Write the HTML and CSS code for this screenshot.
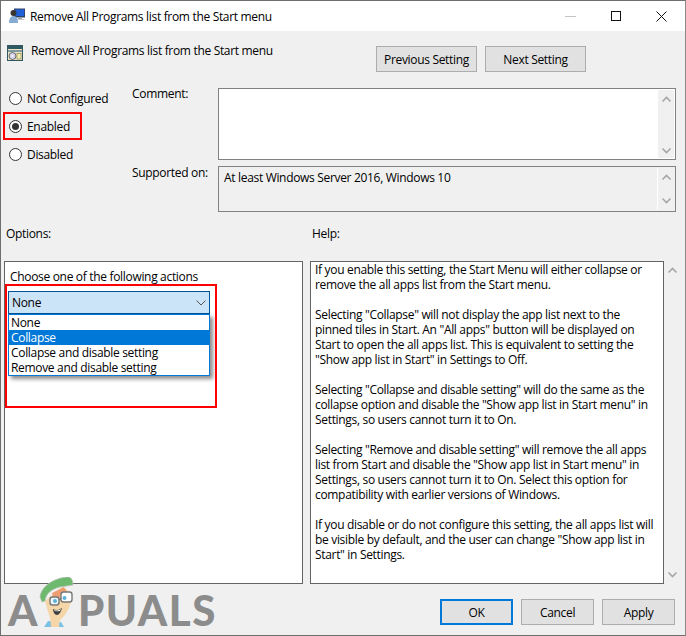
FILE: index.html
```html
<!DOCTYPE html>
<html lang="en">
<head>
<meta charset="utf-8">
<title>Remove All Programs list from the Start menu</title>
<link rel="stylesheet" href="styles.css">
</head>
<body>
<div class="window">
  <header class="titlebar">
    <svg class="title-icon" width="16" height="16" viewBox="0 0 16 16"><rect x="5" y="0.5" width="11" height="9" fill="#2d4468"/><rect x="6" y="1.5" width="9" height="6.5" fill="#1f5fd8"/><rect x="9" y="9.5" width="4" height="2" fill="#9aa0a8"/><rect x="7" y="11" width="8" height="1" fill="#c4c8cc"/><circle cx="4.5" cy="5" r="3" fill="#3a3530"/><path d="M0 15c0-5 2-7 4.5-7S9 10 9 15z" fill="#86acd4"/></svg>
    <span class="title-text">Remove All Programs list from the Start menu</span>
    <div class="win-controls">
      <span class="ctl ctl-min"></span>
      <span class="ctl ctl-max"></span>
      <svg class="ctl-close" width="11" height="11" viewBox="0 0 11 11"><path d="M.5.5l10 10M10.5.5l-10 10" stroke="#111" fill="none"/></svg>
    </div>
  </header>
  <main class="body">
    <div class="head-row">
      <svg class="policy-icon" width="16" height="16" viewBox="0 0 16 16"><rect x=".5" y=".5" width="15" height="15" fill="#ece6c4" stroke="#33575e"/><rect x="1" y="1" width="14" height="3" fill="#2f5a64"/><rect x="1" y="5" width="14" height="2" fill="#7f9aa2"/><circle cx="5.5" cy="11" r="3.5" fill="#d4d2e6" stroke="#6a6a78"/><circle cx="5.5" cy="11" r="1" fill="#fff"/><rect x="10" y="8.5" width="4" height="5.5" fill="#f4eeb0" stroke="#8a8450" stroke-width=".7"/></svg>
      <span class="policy-name">Remove All Programs list from the Start menu</span>
      <div class="nav-btns">
        <button class="btn btn-nav">Previous Setting</button>
        <button class="btn btn-nav">Next Setting</button>
      </div>
    </div>
    <div class="settings">
      <div class="radios">
        <label class="radio"><span class="dot"></span>Not Configured</label>
        <label class="radio radio-on"><span class="dot"></span>Enabled<span class="mark mark-enabled"></span></label>
        <label class="radio"><span class="dot"></span>Disabled</label>
      </div>
      <div class="fields">
        <span class="field-label">Comment:</span>
        <div class="box box-comment">
          <div class="scrollbar"><svg class="chev" viewBox="0 0 9 5"><path d="M.5 4.5l4-4 4 4" /></svg><svg class="chev" viewBox="0 0 9 5"><path d="M.5.5l4 4 4-4" /></svg></div>
        </div>
        <span class="field-label field-label-support">Supported on:</span>
        <div class="box box-support">
          <span class="support-text">At least Windows Server 2016, Windows 10</span>
          <div class="scrollbar"><svg class="chev" viewBox="0 0 9 5"><path d="M.5 4.5l4-4 4 4" /></svg><svg class="chev" viewBox="0 0 9 5"><path d="M.5.5l4 4 4-4" /></svg></div>
        </div>
      </div>
    </div>
    <div class="labels">
      <span class="label-options">Options:</span>
      <span>Help:</span>
    </div>
    <div class="panels">
      <section class="panel panel-options">
        <div class="choose">Choose one of the following actions</div>
        <div class="combo">
          <div class="combo-field"><span>None</span><svg class="combo-chev" viewBox="0 0 10 6"><path d="M.5.5l4.5 4.5 4.5-4.5"/></svg></div>
          <ul class="combo-list">
            <li>None</li>
            <li class="selected">Collapse</li>
            <li>Collapse and disable setting</li>
            <li>Remove and disable setting</li>
          </ul>
          <span class="mark mark-combo"></span>
        </div>
      </section>
      <section class="panel panel-help">
        <p>If you enable this setting, the Start Menu will either collapse or<br>remove the all apps list from the Start menu.</p>
        <p>Selecting "Collapse" will not display the app list next to the<br>pinned tiles in Start. An "All apps" button will be displayed on<br>Start to open the all apps list. This is equivalent to setting the<br>"Show app list in Start" in Settings to Off.</p>
        <p>Selecting "Collapse and disable setting" will do the same as the<br>collapse option and disable the "Show app list in Start menu" in<br>Settings, so users cannot turn it to On.</p>
        <p>Selecting "Remove and disable setting" will remove the all apps<br>list from Start and disable the "Show app list in Start menu" in<br>Settings, so users cannot turn it to On. Select this option for<br>compatibility with earlier versions of Windows.</p>
        <p>If you disable or do not configure this setting, the all apps list will<br>be visible by default, and the user can change "Show app list in<br>Start" in Settings.</p>
      </section>
      <div class="help-scroll"><svg class="chev" viewBox="0 0 9 5"><path d="M.5 4.5l4-4 4 4" /></svg><svg class="chev" viewBox="0 0 9 5"><path d="M.5.5l4 4 4-4" /></svg></div>
    </div>
    <footer class="footer">
      <button class="btn btn-foot btn-default">OK</button>
      <button class="btn btn-foot">Cancel</button>
      <button class="btn btn-foot">Apply</button>
    </footer>
  </main>
  <div class="logo">
    <span class="logo-a">A</span>
    <svg class="mascot" width="38" height="50" viewBox="0 0 38 50">
      <path d="M10 44l-4 6h20l-3-5z" fill="#7cc0e4"/>
      <path d="M12 38l1 12h8l1-8z" fill="#f5d6a8"/>
      <path d="M7 24L24 10l10 6c0 9-4 21-12 27-3 2-7 2-9 0-2-4-4-12-6-19z" fill="#f5d6a8"/>
      <path d="M14 16l12-6 3 5-6 2-2 5-6-2z" fill="#ee9e70"/>
      <path d="M2 20C3 10 14 2 28 0c5-1 7 3 7 8L22 10c-8 2-14 6-15 14l-3 1z" fill="#6db96d" stroke="#b9c4b9" stroke-width=".8"/>
      <rect x="12" y="20" width="9" height="8" rx="2.5" fill="#eef7fb" stroke="#777" stroke-width="1.4"/>
      <rect x="23" y="15" width="11" height="10" rx="2.5" fill="#fff" stroke="#777" stroke-width="1.4"/>
      <path d="M21 23l2-2" stroke="#777" stroke-width="1.2"/>
      <circle cx="17" cy="24" r="2" fill="#5bb3d9"/><circle cx="26.500" cy="21" r="2" fill="#5bb3d9"/>
      <path d="M15 32c3 2 6 1 9-1-1 4-3 7-5 7s-4-3-4-6z" fill="#3c3c3c"/>
      <path d="M16 33c2 1 5 .5 7-1l-.5 1.500c-2 1-4 1-6 .5z" fill="#fff"/>
    </svg>
    <span class="logo-rest">PUALS</span>
  </div>
</div>
</body>
</html>
```
FILE: styles.css
```css
* { box-sizing: border-box; }
html, body { margin: 0; padding: 0; }
body { width: 686px; height: 636px; overflow: hidden; font: 12px/15px "Open Sans", "Noto Sans", sans-serif; color: #000; letter-spacing: -0.32px; }
.window { position: relative; width: 686px; height: 636px; border: 1px solid #6e6e6e; border-right-color: #8a8a8a; display: flex; flex-direction: column; background: #f0f0f0; }
.titlebar { height: 30px; flex: none; background: #fff; display: flex; align-items: center; padding-left: 8px; }
.title-icon { margin-right: 5px; }
.title-text { flex: 1; }
.win-controls { display: flex; align-items: center; height: 30px; }
.ctl { display: block; }
.ctl-min { width: 11px; height: 1px; background: #c4c4c4; margin-right: 35px; }
.ctl-max { width: 10px; height: 10px; border: 1px solid #111; margin-right: 35px; }
.ctl-close { margin-right: 18px; }
.body { flex: 1; display: flex; flex-direction: column; min-height: 0; }
.head-row { display: flex; height: 26px; margin-top: 15px; padding-left: 6px; }
.policy-icon { margin-top: -1px; }
.policy-name { margin-left: 8px; margin-top: -3px; flex: 1; }
.nav-btns { display: flex; gap: 8px; margin-right: 99px; }
.btn { font: inherit; letter-spacing: inherit; color: #000; background: #e1e1e1; border: 1px solid #adadad; padding: 0; }
.btn-nav { width: 101px; height: 26px; }
.settings { display: flex; height: 124px; margin-top: 16px; }
.radios { width: 131px; display: flex; flex-direction: column; gap: 13px; padding-top: 3px; padding-left: 8px; }
.radio { position: relative; display: flex; align-items: center; gap: 5px; height: 15px; }
.dot { width: 13px; height: 13px; border-radius: 50%; border: 1px solid #333; background: #fff; display: flex; align-items: center; justify-content: center; }
.radio-on .dot::after { content: ""; width: 7px; height: 7px; border-radius: 50%; background: #333; }
.mark { position: absolute; border: 2px solid #f00; pointer-events: none; }
.mark-enabled { left: -6px; top: -7px; width: 79px; height: 28px; }
.mark-combo { left: -3px; top: -7px; width: 212px; height: 124px; }
.fields { display: grid; grid-template-columns: 86px 458px; grid-template-rows: 72px 46px; row-gap: 6px; }
.field-label { margin-top: -2px; }
.field-label-support { margin-top: -1px; }
.box { border: 1px solid #828282; display: flex; justify-content: space-between; }
.box-comment { background: #fff; }
.box-support { background: #f0f0f0; }
.support-text { padding: 3px 5px; }
.scrollbar, .help-scroll { background: #f0f0f0; display: flex; flex-direction: column; justify-content: space-between; align-items: center; }
.scrollbar { width: 16px; margin: 1px 1px 1px auto; padding: 7px 0 5px; }
.box-support .scrollbar { border-left: 1px solid #fff; width: 17px; padding: 7px 0; }
.chev { width: 9px; height: 5px; fill: none; stroke: #a6a6a6; stroke-width: 1.6; overflow: visible; }
.labels { display: flex; height: 15px; margin-top: 14px; padding-left: 5px; }
.label-options { width: 306px; }
.panels { display: flex; height: 323px; margin-top: 20px; padding-left: 3px; }
.panel { background: #fff; border: 1px solid #646464; height: 100%; }
.panel-options { width: 299px; padding: 7px 3px 0; margin-right: 7px; }
.choose { padding-left: 2px; margin-bottom: 7px; }
.combo { position: relative; width: 202px; }
.combo-field { height: 23px; background: #cce4f7; border: 1px solid #005499; display: flex; align-items: center; justify-content: space-between; padding: 0 3px 0 3px; }
.combo-chev { width: 10px; height: 6px; fill: none; stroke: #555; overflow: visible; }
.combo-list { list-style: none; margin: 0; padding: 0; background: #fff; border: 1px solid #0078d7; box-shadow: 3px 3px 4px rgba(0,0,0,.45); }
.combo-list li { height: 15px; padding-left: 2px; }
.combo-list .selected { background: #0078d7; color: #fff; }
.panel-help { width: 354px; padding: 0 4px; }
.panel-help p { margin: 0 0 15px; }
.help-scroll { height: 100%; margin: 0; width: 17px; padding: 7px 0; }
.footer { display: flex; justify-content: flex-end; gap: 8px; padding-right: 10px; margin-top: 15px; }
.btn-foot { width: 73px; height: 26px; }
.btn-default { border: 2px solid #0078d7; }
.logo { position: absolute; left: 7px; bottom: 8px; display: flex; align-items: flex-end; font: 900 42px/50px "Lato", "Open Sans", sans-serif; color: #8c8c8c; letter-spacing: 1.5px; height: 50px; }
.logo-a, .logo-rest { margin-bottom: -8px; }
.mascot { margin: 0 2px 0 -1px; }
```
